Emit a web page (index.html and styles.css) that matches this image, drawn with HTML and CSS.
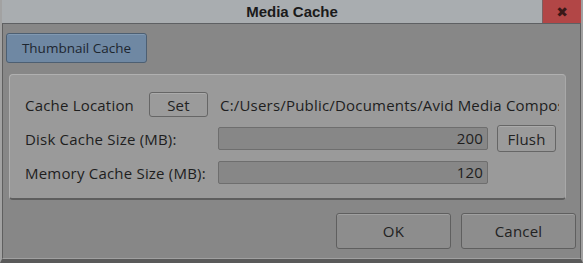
FILE: index.html
```html
<!DOCTYPE html>
<html lang="en">
<head>
  <meta charset="UTF-8" />
  <meta name="viewport" content="width=device-width, initial-scale=1.0"/>
  <title>Media Cache</title>
  <link rel="stylesheet" href="styles.css">
</head>
<body>
  <div class="window">
    <div class="titlebar">
      <div class="title">Media Cache</div>
      <div class="close">&#x2716;</div>
    </div>
    <div class="body">
      <div class="tabs">
        <button class="tab active">Thumbnail Cache</button>
      </div>
      <div class="panel">
        <div class="row">
          <span class="label short">Cache Location</span>
          <button class="btn set">Set</button>
          <span class="path">C:/Users/Public/Documents/Avid Media Composer/Thumbnails</span>
        </div>
        <div class="row">
          <span class="label">Disk Cache Size (MB):</span>
          <div class="field">200</div>
          <button class="btn flush">Flush</button>
        </div>
        <div class="row">
          <span class="label">Memory Cache Size (MB):</span>
          <div class="field">120</div>
        </div>
      </div>
      <div class="actions">
        <button class="btn big">OK</button>
        <button class="btn big">Cancel</button>
      </div>
    </div>
  </div>
</body>
</html>
```

FILE: styles.css
```css
body {
  margin: 0;
  padding: 0;
  background: #9c9c9c;
  font-family: 'Open Sans', 'DejaVu Sans', sans-serif;
  color: #1e1e1e;
}
.window {
  width: 583px;
  height: 263px;
  box-sizing: border-box;
  border-left: 2px solid #a2a2a2;
  border-right: 2px solid #a2a2a2;
  border-bottom: 4px solid #5a5a5a;
  background: #878787;
  display: flex;
  flex-direction: column;
  overflow: hidden;
}
.titlebar {
  height: 23px;
  display: flex;
  background: #a9adb0;
  border-bottom: 1px solid #5e6063;
}
.title {
  flex: 1;
  text-align: center;
  font-family: 'Liberation Sans', Arial, sans-serif;
  font-weight: bold;
  font-size: 15px;
  line-height: 23px;
  color: #1a1a1a;
  padding-left: 40px;
}
.close {
  width: 38px;
  background: #b24646;
  border-left: 1px solid #7d6060;
  color: #3a1818;
  font-size: 14px;
  line-height: 23px;
  text-align: center;
}
.body {
  flex: 1;
  border-left: 1px solid #5f5f5f;
  border-right: 1px solid #5f5f5f;
  border-bottom: 1px solid #a0a0a0;
  padding: 9px 4px 0 3px;
  display: flex;
  flex-direction: column;
}
.tabs {
  display: flex;
  height: 30px;
}
.btn, .tab {
  font-family: inherit;
  font-size: 15px;
  letter-spacing: 0.2px;
  color: #222;
  border: 1px solid #666;
  border-radius: 3px;
  background: #9b9b9b;
  box-shadow: inset 0 1px 0 #ababab;
  padding: 0;
  cursor: pointer;
}
.tab.active {
  width: 141px;
  height: 30px;
  font-size: 13.5px;
  letter-spacing: 0;
  background: #6f88a3;
  border-color: #4d5f72;
  box-shadow: inset 0 1px 0 #8199b2;
  color: #1d2630;
}
.panel {
  margin: 11px 10px 0 3px;
  height: 126px;
  box-sizing: border-box;
  background: #9a9a9a;
  border: 1px solid #b0b0b0;
  border-right-color: #a8a8a8;
  border-bottom: 2px solid #5e5e5e;
  border-radius: 4px;
  padding: 17px 0 0 15px;
  display: flex;
  flex-direction: column;
  gap: 9px;
}
.row {
  display: flex;
  align-items: center;
  height: 25px;
  font-size: 15px;
  letter-spacing: 0.2px;
  white-space: nowrap;
}
.label {
  width: 193px;
}
.label.short {
  width: 124px;
}
.set {
  width: 59px;
  height: 25px;
  margin-right: 12px;
}
.path {
  width: 339px;
  overflow: hidden;
}
.field {
  width: 270px;
  height: 23px;
  box-sizing: border-box;
  background: #878787;
  border: 1px solid #6e6e6e;
  border-radius: 2px;
  text-align: right;
  padding-right: 4px;
  line-height: 21px;
}
.flush {
  width: 59px;
  height: 27px;
  margin-left: 9px;
}
.actions {
  display: flex;
  justify-content: flex-end;
  gap: 10px;
  margin-top: 13px;
  padding-right: 0;
}
.big {
  width: 115px;
  height: 36px;
  background: #8d8d8d;
  border-color: #5f5f5f;
  box-shadow: inset 0 1px 0 #a0a0a0;
}
```
